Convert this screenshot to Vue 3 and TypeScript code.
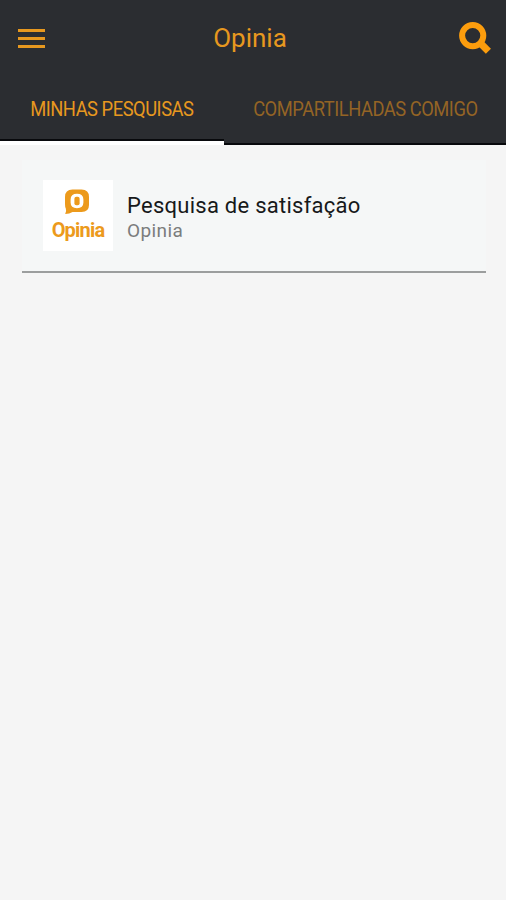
<script setup lang="ts">
import { ref } from 'vue'

interface Survey {
  title: string
  owner: string
}

const tabs: string[] = ['MINHAS PESQUISAS', 'COMPARTILHADAS COMIGO']
const activeTab = ref(0)
const surveys: Survey[] = [{ title: 'Pesquisa de satisfação', owner: 'Opinia' }]
</script>

<template>
  <div class="screen">
    <header class="header">
      <div class="bar">
        <button class="menu" aria-label="Menu">
          <span class="line"></span>
          <span class="line"></span>
          <span class="line"></span>
        </button>
        <h1 class="title">Opinia</h1>
        <button class="search" aria-label="Buscar">
          <svg width="34" height="34" viewBox="0 0 34 34">
            <circle cx="14.7" cy="14.6" r="10.6" fill="none" stroke="#fc9d0d" stroke-width="6" />
            <path d="M20.5 20.3 L30.4 30.2" fill="none" stroke="#fc9d0d" stroke-width="7.2" />
          </svg>
        </button>
      </div>
      <nav class="tabs">
        <button
          v-for="(tab, i) in tabs"
          :key="tab"
          class="tab"
          :class="{ active: i === activeTab }"
          @click="activeTab = i"
        >
          <span class="label">{{ tab }}</span>
        </button>
      </nav>
    </header>
    <main class="list">
      <article v-for="survey in surveys" :key="survey.title" class="card">
        <div class="logo">
          <svg class="mark" width="26" height="26" viewBox="0 0 26 26">
            <path
              fill="#ec9a1c"
              fill-rule="evenodd"
              d="M8.5 .5H17.5Q25 .5 25 8V16Q25 23 17.5 23H8.5Q5.5 25 1.2 25Q2.8 22.5 1.8 19.5Q1 18 1 15V8Q1 .5 8.5 .5ZM13 4.8Q6.6 4.8 6.6 10.5V13.5Q6.6 19.2 13 19.2Q19.4 19.2 19.4 13.5V10.5Q19.4 4.8 13 4.8Z"
            />
            <rect x="10.4" y="7.8" width="5.2" height="8.4" rx="2" fill="#ec9a1c" />
          </svg>
          <span class="brand">Opinia</span>
        </div>
        <div class="info">
          <h2 class="name">{{ survey.title }}</h2>
          <p class="owner">{{ survey.owner }}</p>
        </div>
      </article>
    </main>
  </div>
</template>

<style>
body {
  margin: 0;
  background: #f5f5f5;
}
</style>

<style scoped>
.screen {
  min-height: 900px;
  background: #f5f5f5;
  font-family: Roboto, 'Liberation Sans', sans-serif;
}
button {
  border: 0;
  padding: 0;
  background: none;
  font: inherit;
}
.header {
  background: #2b2d31;
}
.bar {
  display: grid;
  grid-template-columns: 68px 1fr 68px;
  align-items: center;
  height: 76px;
}
.menu {
  display: grid;
  gap: 5px;
  width: 27px;
  margin-left: 18px;
}
.line {
  height: 3px;
  background: #e7981f;
}
.title {
  margin: 0 6px 0 0;
  text-align: center;
  font-size: 26px;
  line-height: 30px;
  font-weight: 400;
  color: #e7981f;
}
.search {
  width: 34px;
  height: 34px;
  margin-left: 20px;
}
.search svg {
  display: block;
}
.tabs {
  display: grid;
  grid-template-columns: 224px 1fr;
  height: 69px;
}
.tab {
  display: flex;
  justify-content: center;
  box-sizing: border-box;
  padding-top: 22px;
  border-bottom: 2px solid #08090c;
  color: #946425;
  font-size: 19.5px;
  line-height: 23px;
  white-space: nowrap;
  letter-spacing: -0.5px;
}
.label {
  transform: scaleX(0.94);
}
.tab.active {
  color: #e7981f;
  border-bottom: 4px solid #fff;
  box-shadow: inset 0 -2px #08090c;
}
.list {
  padding: 15px 20px 0 22px;
}
.card {
  display: flex;
  gap: 14px;
  box-sizing: border-box;
  height: 113px;
  padding: 20px 0 0 21px;
  background: #f5f7f7;
  border-bottom: 2px solid #9c9e9e;
}
.logo {
  display: flex;
  flex-direction: column;
  align-items: center;
  box-sizing: border-box;
  width: 70px;
  height: 71px;
  padding-top: 9px;
  background: #fff;
}
.mark {
  margin-right: 2px;
}
.brand {
  margin-top: 3px;
  font-size: 20px;
  line-height: 24px;
  font-weight: 700;
  color: #ec9a1c;
  letter-spacing: -0.8px;
}
.name {
  margin: 13px 0 0;
  font-size: 22px;
  line-height: 26px;
  font-weight: 400;
  color: #17191a;
  letter-spacing: 0.26px;
}
.owner {
  margin: 1px 0 0;
  font-size: 19px;
  line-height: 22px;
  font-weight: 400;
  color: #7b7d7d;
  letter-spacing: 0.4px;
}
</style>
